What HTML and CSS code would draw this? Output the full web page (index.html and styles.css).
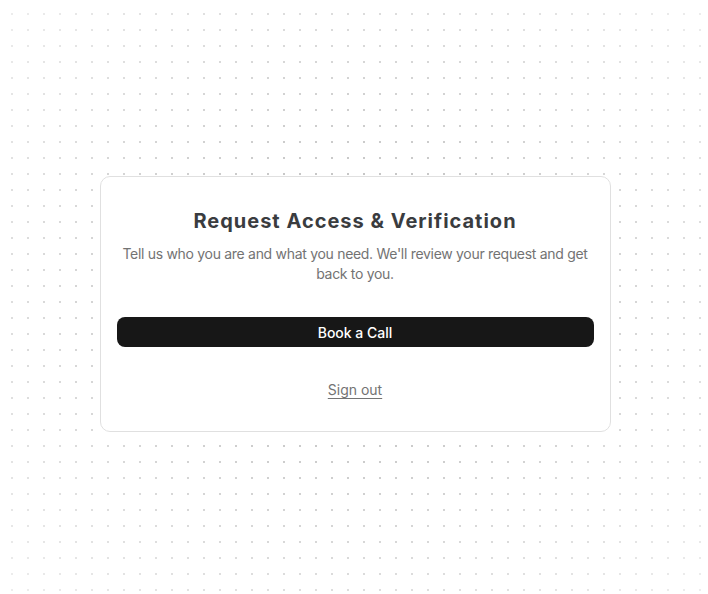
FILE: index.html
```html
<!DOCTYPE html>
<html lang="en">
<head>
<meta charset="utf-8">
<title>Request Access &amp; Verification</title>
<link rel="stylesheet" href="styles.css">
</head>
<body>
<div class="dots"></div>
<main class="page">
  <section class="card">
    <h1 class="title">Request Access &amp; Verification</h1>
    <p class="subtitle">Tell us who you are and what you need. We'll review your request and get back to you.</p>
    <button class="btn" type="button">Book a Call</button>
    <a class="signout" href="#">Sign out</a>
  </section>
</main>
</body>
</html>
```
FILE: styles.css
```css
html, body {
  margin: 0;
  padding: 0;
  background: #ffffff;
  font-family: Inter, "Noto Sans", "Liberation Sans", sans-serif;
}

.dots {
  position: fixed;
  inset: 0;
  background-color: #c4c4c4;
  background-image:
    linear-gradient(to right, transparent 2px, #ffffff 2px),
    linear-gradient(to bottom, transparent 2px, #ffffff 2px);
  background-size: 16px 16px;
  background-position: 11px 13px;
  -webkit-mask-image: radial-gradient(ellipse at center, rgba(0,0,0,1) 25%, rgba(0,0,0,0.28) 100%);
  mask-image: radial-gradient(ellipse at center, rgba(0,0,0,1) 25%, rgba(0,0,0,0.28) 100%);
  z-index: 0;
}

.page {
  position: relative;
  z-index: 1;
  min-height: 594px;
  box-sizing: border-box;
  display: flex;
  justify-content: center;
  align-items: flex-start;
  padding-top: 176px;
  padding-left: 2px;
}

.card {
  width: 511px;
  box-sizing: border-box;
  background: #ffffff;
  border: 1px solid #e0e0e0;
  border-radius: 10px;
  padding: 30px 16px 31px;
  display: flex;
  flex-direction: column;
  align-items: stretch;
  text-align: center;
}

.title {
  margin: 0;
  font-size: 20px;
  line-height: 28px;
  font-weight: 700;
  letter-spacing: 1px;
  color: #3a3c3f;
}

.subtitle {
  margin: 9px 0 0;
  font-size: 14px;
  line-height: 20px;
  letter-spacing: -0.3px;
  color: #737373;
}

.btn {
  margin-top: 33px;
  height: 30px;
  border: none;
  border-radius: 8px;
  background: #171717;
  color: #ffffff;
  font-family: inherit;
  font-size: 14px;
  font-weight: 500;
  cursor: pointer;
}

.signout {
  margin-top: 33px;
  align-self: center;
  font-size: 14px;
  line-height: 20px;
  color: #737373;
  text-decoration: underline;
  text-underline-offset: 3px;
}
```
